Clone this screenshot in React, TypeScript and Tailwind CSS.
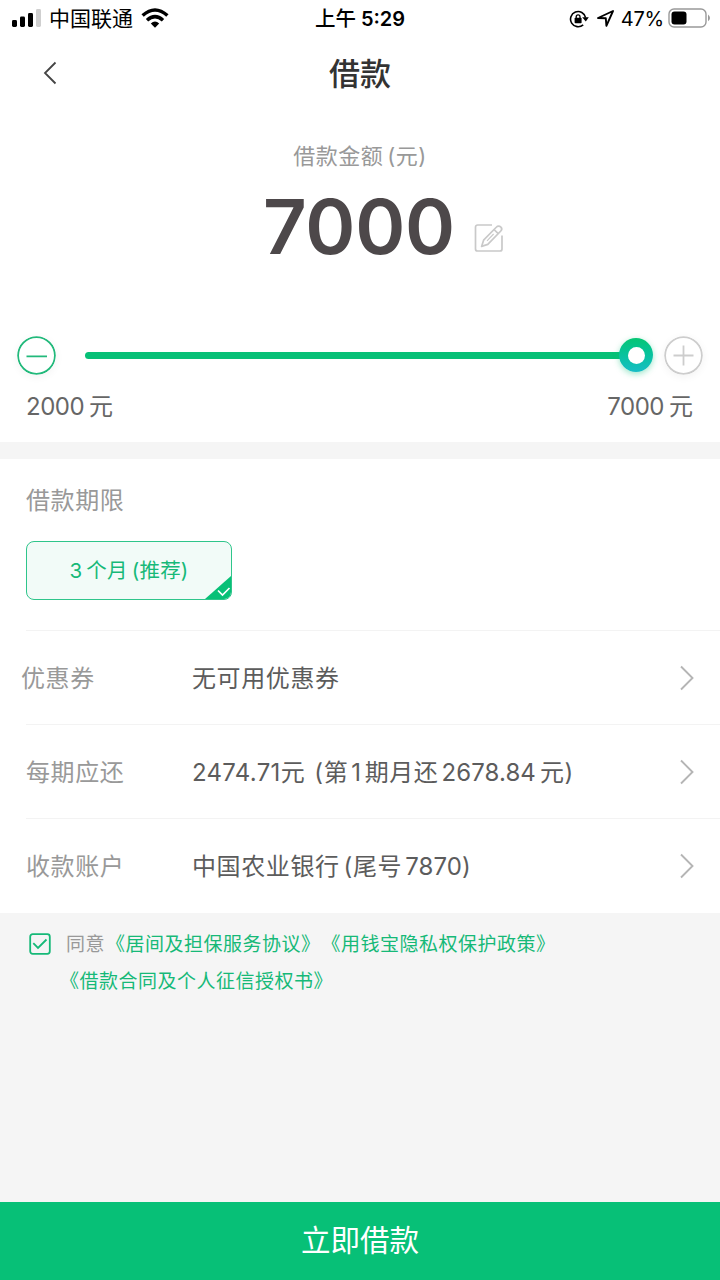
import type { ReactNode } from "react";

function BackIcon() {
  return (
    <svg width="14" height="24" viewBox="0 0 14 24" fill="none">
      <path d="M12.5 1.5L2 12l10.5 10.5" stroke="#444" strokeWidth="1.8" />
    </svg>
  );
}

function ChevronRight() {
  return (
    <svg className="mt-[2px]" width="16" height="26" viewBox="0 0 16 26" fill="none">
      <path d="M2 1.5L13.5 13L2 24.5" stroke="#b5b5b5" strokeWidth="1.9" />
    </svg>
  );
}

function EditIcon() {
  return (
    <svg width="30" height="30" viewBox="0 0 30 30" fill="none" stroke="#c9c9c9" strokeWidth="1.7">
      <path d="M18 2H3.5A2 2 0 0 0 1.5 4V26A2 2 0 0 0 3.5 28H26A2 2 0 0 0 28 26V12.5" />
      <path d="M7.6 23.4L9.6 17.2L22.5 4A2.6 2.6 0 0 1 26.8 8L13.8 21.4Z" strokeLinejoin="round" />
      <path d="M20 6.5L24.2 10.6" />
      <path d="M13 17.8L19.6 11" strokeWidth="1.1" />
    </svg>
  );
}

function StatusBar() {
  return (
    <div className="flex h-[38px] items-center text-black">
      <div className="flex w-[240px] items-center pl-3">
        <svg className="-mt-[2px]" width="30" height="20" viewBox="0 0 30 20">
          <rect x="0" y="12" width="5" height="7" rx="1.4" />
          <rect x="8" y="8.5" width="5" height="10.5" rx="1.4" />
          <rect x="16" y="5" width="5" height="14" rx="1.4" />
          <rect x="24" y="1" width="5" height="18" rx="1.4" fill="#cfcfcf" />
        </svg>
        <span className="-mt-px ml-[7px] text-[21px] leading-none">中国联通</span>
        <svg className="-mt-[3px] ml-2" width="28" height="20" viewBox="0 0 28 20" fill="none" stroke="#000" strokeWidth="3.5">
          <path d="M1.6 7.5Q14 -3.5 26.4 7.5" />
          <path d="M6 12.2Q14 5 22 12.2" />
          <path d="M9.8 15.6Q14 11.6 18.2 15.6L14 19.8Z" fill="#000" stroke="none" />
        </svg>
      </div>
      <div className="flex w-[240px] items-center justify-center whitespace-nowrap text-[20.5px] font-medium leading-none">
        <span>上午</span>
        <span className="ml-[5px] text-[20px] font-semibold">5:29</span>
      </div>
      <div className="flex w-[240px] items-center justify-end pr-[9px]">
        <svg width="20" height="20" viewBox="0 0 20 20" fill="none" stroke="#000" strokeWidth="1.6">
          <path d="M14.2 15.8A7.6 7.6 0 1 1 16.6 8.7" />
          <path d="M13.2 8.3H19.8L16.8 12.5Z" fill="#000" stroke="none" />
          <rect x="5.6" y="8.8" width="7" height="5.4" rx="0.8" fill="#000" stroke="none" />
          <path d="M7.2 9.5V7.8A1.9 1.9 0 0 1 11 7.8V9.5" strokeWidth="1.3" />
        </svg>
        <svg className="-mt-[2px] ml-[7px]" width="19" height="19" viewBox="0 0 19 19" fill="none" stroke="#000" strokeWidth="1.9" strokeLinejoin="round">
          <path d="M2 9L17 2L10.4 16.8L9.8 9.2Z" />
        </svg>
        <span className="ml-[6px] text-[20px] leading-none tracking-[-0.2px]">47%</span>
        <svg className="-mt-[2px] ml-[4px]" width="43" height="20" viewBox="0 0 43 20">
          <rect x="1" y="1" width="37" height="18" rx="5" fill="none" stroke="#999" strokeWidth="1.4" />
          <rect x="3.5" y="3.6" width="15" height="12.8" rx="3" />
          <path d="M40 6.5Q44 9.9 40 13.3Z" fill="#999" />
        </svg>
      </div>
    </div>
  );
}

function Row({ label, children, indent = "pl-[26px]" }: { label: string; children: ReactNode; indent?: string }) {
  return (
    <div className="relative flex h-[94px] items-center pr-[25px]">
      <div className="absolute left-[26px] right-0 top-0 h-px bg-[#f3f3f3]" />
      <div className={`w-[192px] pt-[4px] text-[24px] tracking-[0.6px] text-[#999] ${indent}`}>{label}</div>
      <div className="flex flex-1 items-center whitespace-nowrap pt-[4px] text-[24px] tracking-[0.6px] text-[#5c5c5c]">{children}</div>
      <ChevronRight />
    </div>
  );
}

export default function App() {
  return (
    <div className="flex h-[1280px] w-[720px] flex-col overflow-hidden bg-[#f5f5f5] font-['Inter','Noto_Sans_CJK_SC',sans-serif] leading-none">
      <div className="h-[442px] bg-white">
        <StatusBar />

        {/* Title */}
        <header className="flex h-[70px] items-center">
          <div className="w-[120px] pl-[43px]">
            <BackIcon />
          </div>
          <h1 className="flex-1 text-center text-[31px] font-medium text-[#333]">借款</h1>
          <div className="w-[120px]" />
        </header>

        {/* Amount */}
        <div className="flex h-[94px] items-center justify-center pt-px text-[22px] tracking-[0.5px] text-[#999]">
          <span>借款金额</span>
          <span className="ml-1">(元)</span>
        </div>
        <div className="-mt-[20px] flex h-[90px] items-center pl-[263px]">
          <span className="w-[211px] pb-[2px] text-[76px] font-semibold tracking-[-0.3px] text-[#4d484a]">7000</span>
          <div className="mt-[22px]">
            <EditIcon />
          </div>
        </div>

        {/* Slider */}
        <div className="mt-[63px] flex h-10 items-center pl-[17px]">
          <svg className="rounded-full shadow-[0_2px_8px_rgba(0,0,0,0.05)]" width="39" height="39" viewBox="0 0 39 39" fill="none" stroke="#22b97b" strokeWidth="1.8">
            <circle cx="19.5" cy="19.5" r="18.4" />
            <path d="M9.5 20.3h20.5" />
          </svg>
          <div className="ml-[29px] h-[7px] w-[540px] rounded-l-full bg-[#07c077]" />
          <div className="-ml-[6px] flex h-[34px] w-[34px] items-center justify-center rounded-full bg-linear-to-b from-[#06c672] to-[#17bdc5] shadow-[0_2px_6px_rgba(7,192,119,0.4)]">
            <div className="h-[17px] w-[17px] rounded-full bg-white" />
          </div>
          <svg className="ml-[11px] rounded-full shadow-[0_2px_8px_rgba(0,0,0,0.05)]" width="39" height="39" viewBox="0 0 39 39" fill="none" stroke="#cdcdcd" strokeWidth="1.8">
            <circle cx="19.5" cy="19.5" r="18.4" />
            <path d="M9.5 19.5h20M19.5 9.5v20" />
          </svg>
        </div>
        <div className="mt-[18px] flex h-[28px] items-center justify-between pl-[26px] pr-[27px] text-[24px] text-[#666]">
          <div className="flex items-center"><span className="tracking-[-0.5px]">2000</span><span className="ml-[5px]">元</span></div>
          <div className="flex items-center"><span className="tracking-[-0.5px]">7000</span><span className="ml-[5px]">元</span></div>
        </div>
      </div>

      {/* Term */}
      <div className="mt-[17px] h-[172px] bg-white pl-[26px]">
        <div className="flex h-[82px] items-center pt-[2px] text-[24px] tracking-[0.6px] text-[#999]">借款期限</div>
        <div className="relative flex h-[59px] w-[206px] items-center justify-center overflow-hidden rounded-[8px] border border-[#2fc58b] bg-[#f2fbf8] pt-[2px] text-[20.5px] tracking-[0.2px] text-[#16b978]">
          <span>3</span>
          <span className="ml-[4px]">个月</span>
          <span className="ml-[4px]">(推荐)</span>
          <svg className="absolute bottom-0 right-0" width="26" height="23" viewBox="0 0 26 23" fill="none">
            <path d="M0 23L26 0V23Z" fill="#07c077" />
            <path d="M13 14.5L17.5 19L24.5 12" stroke="#fff" strokeWidth="1.7" />
          </svg>
        </div>
      </div>

      <div className="-mt-px bg-white">
        <Row label="优惠券" indent="pl-[21px]">无可用优惠券</Row>
        <Row label="每期应还">
          <span className="tracking-[0.3px]">2474.71</span>
          <span>元</span>
          <span className="ml-[9px]">(第</span>
          <span className="ml-[3px]">1</span>
          <span className="ml-[3px]">期月还</span>
          <span className="ml-[3px] tracking-[0.1px]">2678.84</span>
          <span className="ml-[4px]">元)</span>
        </Row>
        <Row label="收款账户">
          <span>中国农业银行</span>
          <span className="ml-1">(尾号</span>
          <span className="ml-[3px] tracking-[0.1px]">7870)</span>
        </Row>
        <div className="h-px" />
      </div>

      {/* Agreements */}
      <div className="flex flex-1 pl-[29px] pt-[13px] text-[19px] leading-[37px] text-[#16b978]">
        <svg className="mt-[7px]" width="22" height="22" viewBox="0 0 22 22" fill="none" stroke="#16b978" strokeWidth="1.8">
          <rect x="1.2" y="1.2" width="19.6" height="19.6" rx="2.5" />
          <path d="M4.3 10.2L9 15L17.5 6.5" />
        </svg>
        <div className="ml-[15px] whitespace-nowrap tracking-[0.5px]">
          <div className="flex">
            <span className="text-[#999]">同意</span>
            <span className="ml-px">《居间及担保服务协议》</span>
            <span className="ml-px">《用钱宝隐私权保护政策》</span>
          </div>
          <div className="-ml-[6px]">《借款合同及个人征信授权书》</div>
        </div>
      </div>

      <button className="flex h-[78px] shrink-0 items-center justify-center bg-[#07c077] text-[29.5px] text-white">
        立即借款
      </button>
    </div>
  );
}
